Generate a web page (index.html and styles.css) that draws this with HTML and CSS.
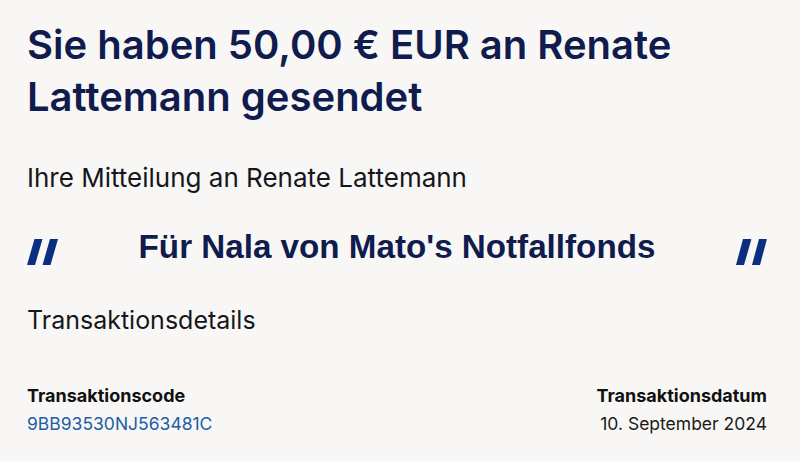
FILE: index.html
```html
<!DOCTYPE html>
<html lang="de">
<head>
    <meta charset="UTF-8">
    <meta name="viewport" content="width=device-width, initial-scale=1.0">
    <title>Zahlung gesendet</title>
    <link rel="stylesheet" href="styles.css">
</head>
<body>
    <div class="page">
        <h1 class="title">Sie haben 50,00 € EUR an Renate Lattemann gesendet</h1>

        <p class="label">Ihre Mitteilung an Renate Lattemann</p>

        <div class="quote">
            <svg class="mark" width="31" height="26" viewBox="0 0 31 26">
                <path d="M7.5 0 H15.5 L8 26 H1 Q0 26 0.3 25 Z" fill="#0b2f80"/>
                <path d="M23 0 H31 L23.5 26 H16.5 Q15.5 26 15.8 25 Z" fill="#0b2f80"/>
            </svg>
            <span class="quote-text">Für Nala von Mato's Notfallfonds</span>
            <svg class="mark" width="31" height="26" viewBox="0 0 31 26">
                <path d="M7 0 H14.5 Q15.5 0 15.2 1 L8 26 H0 Z" fill="#0b2f80"/>
                <path d="M23 0 H30 Q31 0 30.7 1 L24 26 H16 Z" fill="#0b2f80"/>
            </svg>
        </div>

        <p class="label details">Transaktionsdetails</p>

        <div class="info">
            <div class="info-item">
                <div class="info-head">Transaktionscode</div>
                <div class="info-value code">9BB93530NJ563481C</div>
            </div>
            <div class="info-item right">
                <div class="info-head">Transaktionsdatum</div>
                <div class="info-value">10. September 2024</div>
            </div>
        </div>
    </div>
</body>
</html>
```

FILE: styles.css
```css
body {
    margin: 0;
    padding: 0;
    background-color: #f8f7f5;
    font-family: Inter, "Noto Sans", sans-serif;
    color: #111;
}
.page {
    padding: 19px 33px 0 27px;
}
.title {
    margin: 0;
    font-size: 40px;
    line-height: 52px;
    font-weight: 600;
    color: #0f1c4d;
}
.label {
    margin: 39px 0 0;
    font-size: 26px;
    line-height: 32px;
    font-weight: 400;
    color: #15171c;
}
.quote {
    display: flex;
    align-items: center;
    justify-content: space-between;
    height: 40px;
    margin-top: 33px;
}
.mark {
    display: block;
    margin-top: 10px;
}
.quote-text {
    font-family: "Liberation Sans", Arial, sans-serif;
    font-weight: bold;
    font-size: 33.2px;
    color: #0f1c4d;
}
.details {
    margin-top: 37px;
    font-size: 25px;
}
.info {
    display: flex;
    justify-content: space-between;
    margin-top: 48px;
}
.info-item.right {
    text-align: right;
}
.info-head {
    font-size: 18px;
    font-weight: 700;
    line-height: 24px;
    color: #111;
}
.info-value {
    font-size: 17.5px;
    line-height: 24px;
    margin-top: 4px;
    color: #1a1a1a;
}
.code {
    color: #1c5ea8;
}
```
